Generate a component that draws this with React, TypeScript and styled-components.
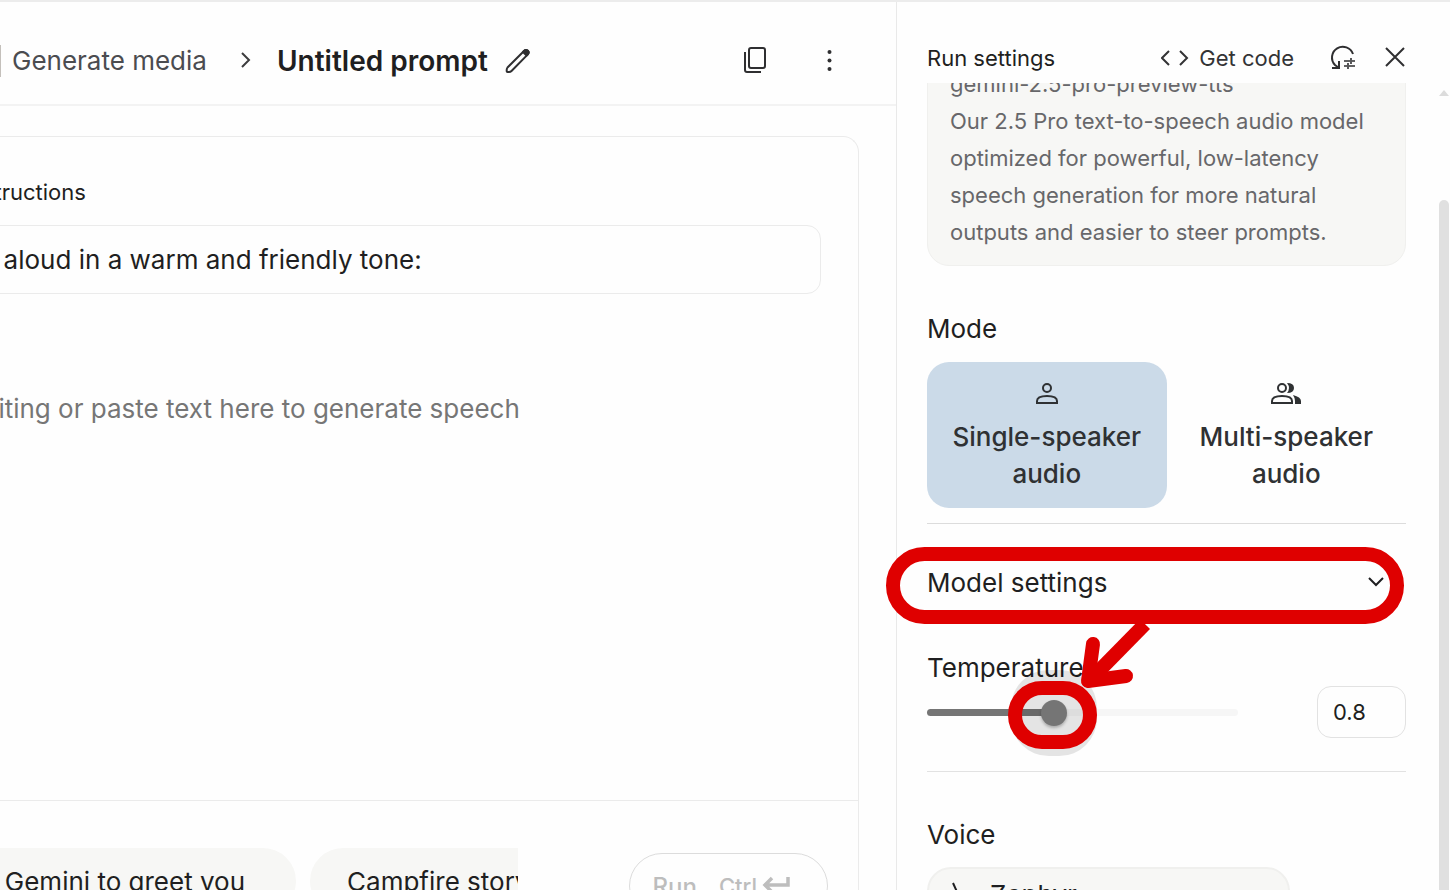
import React, { useState } from "react";
import styled, { createGlobalStyle } from "styled-components";

const GlobalStyle = createGlobalStyle`
  *, *::before, *::after { box-sizing: border-box; }
  body { margin: 0; background: #fefefe; color: #1f1f21; overflow: hidden; }
  body, button, input, textarea { font-family: Inter, "Liberation Sans", sans-serif; }
  h1, h2, p { margin: 0; font-weight: 400; }
`;

const Shell = styled.div`
  display: flex;
  height: 100vh;
  overflow: hidden;
  border-top: 2px solid #ececec;
`;

const Main = styled.main`
  flex: 1;
  min-width: 0;
  display: flex;
  flex-direction: column;
`;

const TopBar = styled.header`
  display: flex;
  align-items: center;
  flex-shrink: 0;
  height: 104px;
  padding: 30px 53px 14px 0;
  border-bottom: 2px solid #f3f3f3;
  overflow: hidden;
`;

const Crumb = styled.a`
  padding-left: 11px;
  margin-right: 28px;
  border-left: 1px solid #c4c0bb;
  color: #4b4c50;
  font-size: 26px;
  line-height: 32px;
  text-decoration: none;
  white-space: nowrap;
`;

const PromptTitle = styled.h1`
  margin-left: 20px;
  margin-right: 15px;
  font-size: 28px;
  line-height: 36px;
  font-weight: 600;
  white-space: nowrap;
`;

const IconButton = styled.button`
  display: flex;
  align-items: center;
  justify-content: center;
  padding: 0;
  border: 0;
  background: none;
  color: #2f2f31;
  cursor: pointer;
`;

const TopActions = styled.div`
  display: flex;
  align-items: center;
  gap: 46px;
  margin-left: auto;
`;

const Card = styled.section`
  flex: 1;
  min-height: 0;
  display: flex;
  flex-direction: column;
  margin: 30px 37px 0 -137px;
  border: 1px solid #ebebeb;
  border-bottom: 0;
  border-radius: 16px 16px 0 0;
`;

const Editor = styled.div`
  flex: 1;
  display: flex;
  flex-direction: column;
  padding: 39px 37px 0 37px;
  border-bottom: 1px solid #ebebeb;
`;

const FieldLabel = styled.label`
  padding-left: 5px;
  font-size: 22px;
  line-height: 32px;
`;

const StyleInput = styled.input`
  height: 69px;
  margin-top: 17px;
  padding: 0 32px;
  border: 1px solid #ebebeb;
  border-radius: 14px;
  background: none;
  color: #1f1f21;
  font-size: 26px;
`;

const ScriptInput = styled.textarea`
  flex: 1;
  margin-top: 96px;
  padding: 0;
  border: 0;
  outline: 0;
  resize: none;
  background: none;
  font-size: 26px;
  line-height: 38px;
  &::placeholder { color: #767676; opacity: 1; }
`;

const Footer = styled.div`
  display: flex;
  justify-content: space-between;
  flex-shrink: 0;
  height: 89px;
  padding: 47px 30px 0 54px;
  overflow: hidden;
`;

const Chips = styled.div`
  display: flex;
  flex: 1;
  gap: 14px;
  margin-right: 111px;
  overflow: hidden;
`;

const Chip = styled.button`
  flex-shrink: 0;
  height: 66px;
  padding: 0 51px 0 37px;
  border: 0;
  border-radius: 33px;
  background: #f7f7f5;
  color: #1f1f21;
  font-size: 26px;
  white-space: nowrap;
`;

const RunButton = styled.button`
  display: flex;
  align-items: center;
  flex-shrink: 0;
  height: 66px;
  margin-top: 5px;
  padding: 0 36px 0 23px;
  border: 1px solid #dcdcdc;
  border-radius: 33px;
  background: none;
  color: #bdbdbd;
  font-size: 24px;
  font-weight: 500;
`;

const Shortcut = styled.span`
  display: flex;
  align-items: center;
  gap: 4px;
  margin-left: 22px;
  font-size: 22px;
`;

const Panel = styled.aside`
  display: flex;
  flex-direction: column;
  flex-shrink: 0;
  width: 554px;
  border-left: 1px solid #e9e9e9;
`;

const PanelBar = styled.header`
  display: flex;
  align-items: center;
  flex-shrink: 0;
  height: 81px;
  padding: 30px 43px 0 30px;
`;

const PanelTitle = styled.h2`
  margin-right: auto;
  font-size: 22px;
  line-height: 32px;
`;

const CodeButton = styled(IconButton)`
  gap: 10px;
  margin-right: 35px;
  color: #333335;
  font-size: 22px;
  line-height: 32px;
`;

const CloseButton = styled(IconButton)`
  margin-left: 26px;
`;

const PanelScroll = styled.div`
  flex: 1;
  min-height: 0;
  display: flex;
`;

const PanelBody = styled.div`
  flex: 1;
  min-width: 0;
  display: flex;
  flex-direction: column;
  padding: 0 32px 0 30px;
  overflow-x: visible;
  overflow-y: clip;
`;

const Scrollbar = styled.div`
  display: flex;
  flex-direction: column;
  align-items: center;
  width: 12px;
  padding-top: 7px;
  color: #dcdcdc;
`;

const ScrollThumb = styled.span`
  flex: 1;
  width: 10px;
  margin-top: 104px;
  border-radius: 5px 5px 0 0;
  background: #e0e0e0;
`;

const ModelCard = styled.div`
  flex-shrink: 0;
  margin-top: -33px;
  padding: 15px 22px 14px;
  border: 1px solid #f0f0ee;
  border-radius: 22px;
  background: #f7f7f5;
  color: #67676a;
  font-size: 22px;
  line-height: 37px;
`;

const SectionTitle = styled.h2`
  flex-shrink: 0;
  font-size: 26px;
  line-height: 36px;
`;

const ModeSection = styled.section`
  flex-shrink: 0;
  padding: 45px 0 15px;
  border-bottom: 1px solid #dcdcdc;
`;

const ModeGrid = styled.div`
  display: grid;
  grid-template-columns: 1fr 1fr;
  margin-top: 15px;
`;

const ModeButton = styled.button<{ $active?: boolean }>`
  display: flex;
  flex-direction: column;
  align-items: center;
  justify-content: flex-start;
  gap: 9px;
  height: 146px;
  padding: 17px 20px 0;
  border: 0;
  border-radius: 22px;
  background: ${(p) => (p.$active ? "#cbdae8" : "none")};
  color: #2f3133;
  font-size: 26px;
  line-height: 37px;
  font-weight: 500;
`;

const SettingsToggle = styled.button`
  position: relative;
  display: flex;
  align-items: center;
  justify-content: space-between;
  flex-shrink: 0;
  height: 46px;
  margin-top: 35px;
  padding: 0 20px 0 0;
  border: 0;
  background: none;
  color: #1f1f21;
  font-size: 26px;
  text-align: left;
`;

const Temperature = styled.section`
  position: relative;
  flex-shrink: 0;
  margin-top: 45px;
  padding-bottom: 33px;
  border-bottom: 1px solid #e2e2e2;
`;

const TemperatureLabel = styled.label`
  display: block;
  font-size: 26px;
  line-height: 36px;
`;

const SliderRow = styled.div`
  display: flex;
  align-items: center;
  justify-content: space-between;
  height: 52px;
`;

const Slider = styled.input<{ $fill: number }>`
  flex: 1;
  min-width: 0;
  height: 26px;
  margin: 0 79px 0 0;
  background: none;
  appearance: none;
  &::-webkit-slider-runnable-track {
    height: 7px;
    border-radius: 4px;
    background: linear-gradient(to right, #757575 ${(p) => p.$fill}%, #f6f6f6 ${(p) => p.$fill}%);
  }
  &::-webkit-slider-thumb {
    appearance: none;
    width: 26px;
    height: 26px;
    margin-top: -9px;
    border-radius: 50%;
    background: #757575;
    box-shadow: 0 2px 3px rgba(0, 0, 0, 0.25), 0 0 0 30px rgba(0, 0, 0, 0.1);
  }
`;

const NumberBox = styled.input`
  width: 89px;
  height: 52px;
  padding: 0 15px;
  border: 1px solid #e2e2e2;
  border-radius: 14px;
  background: none;
  color: #1f1f21;
  font-size: 22px;
`;

const Ring = styled.span`
  position: absolute;
  border: 14px solid #df0000;
  border-radius: 39px;
  pointer-events: none;
`;

const ToggleRing = styled(Ring)`
  inset: -12px 2px -19px -41px;
  z-index: 1;
`;

const ThumbRing = styled(Ring)`
  top: 31px;
  left: 81px;
  width: 89px;
  height: 68px;
`;

const Arrow = styled.svg`
  position: absolute;
  top: -30px;
  left: 144px;
  pointer-events: none;
`;

const VoiceTitle = styled(SectionTitle)`
  margin-top: 45px;
`;

const VoiceButton = styled.button`
  display: flex;
  align-items: center;
  flex-shrink: 0;
  gap: 20px;
  width: 363px;
  height: 54px;
  margin-top: 14px;
  padding: 0 21px;
  border: 2px solid #f0f0ee;
  border-radius: 24px;
  background: #f7f7f5;
  color: #1f1f21;
  font-size: 26px;
`;

export default function App() {
  const [temperature, setTemperature] = useState("0.8");
  return (
    <>
      <GlobalStyle />
      <Shell>
        <Main>
          <TopBar>
            <Crumb href="#media">Generate media</Crumb>
            <svg width="22" height="22" viewBox="0 0 22 22" fill="none" stroke="#3c3c3e" strokeWidth="2">
              <path d="M7 3l7 7-7 7" />
            </svg>
            <PromptTitle>Untitled prompt</PromptTitle>
            <IconButton aria-label="Rename prompt">
              <svg width="30" height="30" viewBox="0 0 30 30" fill="none" stroke="currentColor" strokeWidth="2" strokeLinejoin="round">
                <path d="M4.500 21.500L21 5q2-2 3.800-.2t-.2 3.800L8.500 25q-1 1-2.500 1H4.500q-.8 0-.8-.8V24q0-1.500.8-2.500z" />
                <path d="M20 6l1-1q2-2 3.800-.2t-.2 3.800l-1 1z" fill="currentColor" />
              </svg>
            </IconButton>
            <TopActions>
              <IconButton aria-label="Copy prompt">
                <svg width="28" height="28" viewBox="0 0 28 28" fill="none" stroke="currentColor" strokeWidth="2">
                  <rect x="8" y="1" width="16" height="20" rx="2" />
                  <path d="M4 5v18q0 2 2 2h14" />
                </svg>
              </IconButton>
              <IconButton aria-label="More options">
                <svg width="28" height="28" viewBox="0 0 28 28" fill="currentColor">
                  <circle cx="14.500" cy="5" r="2" />
                  <circle cx="14.500" cy="13.500" r="2" />
                  <circle cx="14.500" cy="22" r="2" />
                </svg>
              </IconButton>
            </TopActions>
          </TopBar>
          <Card>
            <Editor>
              <FieldLabel htmlFor="style">Style instructions</FieldLabel>
              <StyleInput id="style" defaultValue="Read aloud in a warm and friendly tone:" />
              <ScriptInput
                aria-label="Script"
                placeholder="Start writing or paste text here to generate speech"
              />
            </Editor>
            <Footer>
              <Chips>
                <Chip>Tell Gemini to greet you</Chip>
                <Chip>Campfire story</Chip>
              </Chips>
              <RunButton>
                Run
                <Shortcut>
                  Ctrl
                  <svg width="30" height="22" viewBox="0 0 30 22" fill="none" stroke="currentColor" strokeWidth="3.500">
                    <path d="M27 2v8H3M11 3l-7 7 7 7" />
                  </svg>
                </Shortcut>
              </RunButton>
            </Footer>
          </Card>
        </Main>
        <Panel>
          <PanelBar>
            <PanelTitle>Run settings</PanelTitle>
            <CodeButton>
              <svg width="28" height="20" viewBox="0 0 28 20" fill="none" stroke="currentColor" strokeWidth="2">
                <path d="M8 3l-7 7 7 7M19 3l7 7-7 7" />
              </svg>
              Get code
            </CodeButton>
            <IconButton aria-label="Reset settings">
              <svg width="28" height="28" viewBox="0 0 28 28" fill="none" stroke="currentColor" strokeWidth="2">
                <path d="M24 10A10.800 10.800 0 1 0 6 21l4 3M3 24h7v-7" />
                <path d="M15 17h6M23 17h3M22 14v6M15 22h3M20 22h6M19 19v6" strokeWidth="1.600" />
              </svg>
            </IconButton>
            <CloseButton aria-label="Close">
              <svg width="24" height="24" viewBox="0 0 24 24" fill="none" stroke="currentColor" strokeWidth="2">
                <path d="M3 2l18 18M21 2L3 20" />
              </svg>
            </CloseButton>
          </PanelBar>
          <PanelScroll>
            <PanelBody>
              <ModelCard>
                <p>gemini-2.5-pro-preview-tts</p>
                <p>
                  Our 2.5 Pro text-to-speech audio model optimized for powerful, low-latency speech
                  generation for more natural outputs and easier to steer prompts.
                </p>
              </ModelCard>
              <ModeSection>
                <SectionTitle>Mode</SectionTitle>
                <ModeGrid>
                  <ModeButton $active aria-pressed="true">
                    <svg width="32" height="30" viewBox="0 0 32 30" fill="none" stroke="currentColor" strokeWidth="2">
                      <circle cx="16" cy="9" r="4" />
                      <path d="M6 24v-2q0-5 10-5t10 5v2z" />
                    </svg>
                    Single-speaker audio
                  </ModeButton>
                  <ModeButton aria-pressed="false">
                    <svg width="32" height="30" viewBox="0 0 32 30" fill="none" stroke="currentColor" strokeWidth="2">
                      <circle cx="12" cy="9" r="4" />
                      <path d="M2 24v-2q0-5 10-5t10 5v2z" />
                      <path d="M17 4q7 0 7 5t-7 5q4-5 0-10zM23 16q8 2 8 6v3h-6v-3q0-3-2-6z" fill="currentColor" stroke="none" />
                    </svg>
                    Multi-speaker audio
                  </ModeButton>
                </ModeGrid>
              </ModeSection>
              <SettingsToggle aria-expanded="true">
                Model settings
                <svg width="20" height="20" viewBox="0 0 20 20" fill="none" stroke="currentColor" strokeWidth="2">
                  <path d="M3 6l7 7 7-7" />
                </svg>
                <ToggleRing />
              </SettingsToggle>
              <Temperature>
                <TemperatureLabel htmlFor="temperature">Temperature</TemperatureLabel>
                <SliderRow>
                  <Slider
                    id="temperature"
                    type="range"
                    min="0"
                    max="2"
                    step="0.1"
                    value={temperature}
                    $fill={Number(temperature) * 50}
                    onChange={(e) => setTemperature(e.target.value)}
                  />
                  <NumberBox
                    aria-label="Temperature value"
                    value={temperature}
                    onChange={(e) => setTemperature(e.target.value)}
                  />
                </SliderRow>
                <ThumbRing />
                <Arrow width="90" height="76" viewBox="0 0 90 76" fill="none" stroke="#df0000" strokeWidth="14">
                  <path d="M22 24L17 61L55 56" strokeLinecap="round" strokeLinejoin="round" />
                  <path d="M74 4L19 60" />
                </Arrow>
              </Temperature>
              <VoiceTitle>Voice</VoiceTitle>
              <VoiceButton>
                <svg width="20" height="26" viewBox="0 0 20 26" fill="none" stroke="currentColor" strokeWidth="2">
                  <path d="M3 2l5 11-5 11" />
                </svg>
                Zephyr
              </VoiceButton>
            </PanelBody>
            <Scrollbar>
              <svg width="10" height="6" viewBox="0 0 10 6" fill="currentColor">
                <path d="M0 6l5-6 5 6z" />
              </svg>
              <ScrollThumb />
            </Scrollbar>
          </PanelScroll>
        </Panel>
      </Shell>
    </>
  );
}
